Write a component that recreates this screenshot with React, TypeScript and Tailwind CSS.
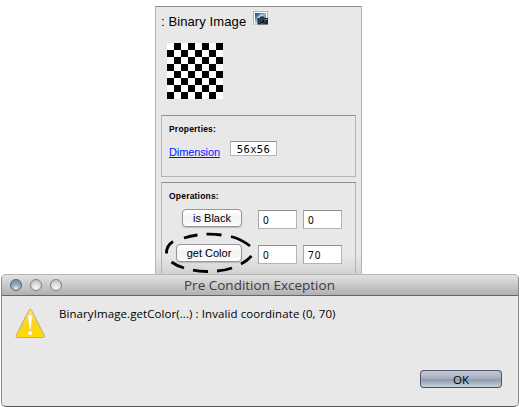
import React from 'react';

function Checkerboard() {
  return (
    <div className="grid h-14 w-14 grid-cols-8">
      {Array.from({ length: 64 }, (_, i) => (
        <span key={i} className={(Math.floor(i / 8) + i) % 2 ? 'bg-black' : 'bg-white'} />
      ))}
    </div>
  );
}

function CameraPicture() {
  return (
    <svg className="mt-1 ml-[7px] h-4 w-4" viewBox="0 0 16 16">
      <defs>
        <linearGradient id="sky" x1="0" y1="0" x2="1" y2="1">
          <stop offset="0" stopColor="#123c68" />
          <stop offset=".5" stopColor="#8fbfe4" />
          <stop offset="1" stopColor="#1c4f83" />
        </linearGradient>
      </defs>
      <rect x=".5" y=".5" width="14" height="12.5" fill="#fff" stroke="#b4b4b4" />
      <rect x="2" y="2" width="11" height="9.500" fill="url(#sky)" />
      <path d="M4 7l4-4 2 1-5 5z" fill="#d7edfa" opacity=".7" />
      <path d="M4.5 7h2l1-1.5h3l1 1.5H15v6.5H4.5z" fill="#26292d" />
      <circle cx="9" cy="10" r="2.6" fill="#111" stroke="#60656b" strokeWidth=".8" />
      <circle cx="8.5" cy="9.5" r="1" fill="#4d6680" />
      <path d="M12 8h2v1h-2z" fill="#90959a" />
    </svg>
  );
}

function WarningIcon() {
  return (
    <svg className="mt-[12px] ml-[13px] h-[32px] w-[31px] shrink-0" viewBox="0 0 30 32">
      <defs>
        <linearGradient id="warn" x1="0" y1="0" x2="0" y2="1">
          <stop offset="0" stopColor="#ffe46a" />
          <stop offset=".55" stopColor="#fbd51b" />
          <stop offset="1" stopColor="#ffdc00" />
        </linearGradient>
      </defs>
      <path d="M13.2 2.2Q14.5.2 15.8 2.2L28.7 27.6Q29.2 29.5 27.4 29.5H1.6Q-.2 29.5.4 27.6Z" transform="translate(.2 0)" fill="url(#warn)" stroke="#b3a77a" strokeWidth=".9" />
      <path d="M12.4 8.7Q12.3 6.5 14.6 6.5T16.9 8.7L15.6 20.5Q14.7 21.9 13.7 20.5Z" fill="#fff" stroke="#e0ba30" strokeWidth=".4" />
      <circle cx="14.6" cy="25" r="2.3" fill="#fff" stroke="#e0ba30" strokeWidth=".4" />
    </svg>
  );
}

function Field({ value }: { value: string }) {
  return (
    <div className="h-[19px] w-[39px] border border-[#b5b5b5] border-t-[#8f8f8f] border-l-[#a5a5a5] bg-white pl-1 font-['Noto_Sans',sans-serif] text-[10px] leading-[18px] tracking-[1px]">
      {value}
    </div>
  );
}

function Row({ label, a, b, buttonClass }: { label: string; a: string; b: string; buttonClass: string }) {
  return (
    <div className="flex h-[35px]">
      <div className="flex w-[80px] justify-end">
        <button className={'-mt-px h-[18px] rounded-[4px] border border-[#969696] bg-linear-to-b from-white via-[#f3f3f3] to-[#fefefe] text-[11px] leading-[16px] shadow-[0_1px_1px_#bbb] ' + buttonClass}>
          {label}
        </button>
      </div>
      <div className="ml-4 flex gap-[6px]">
        <Field value={a} />
        <Field value={b} />
      </div>
    </div>
  );
}

function TrafficLight({ active = false }: { active?: boolean }) {
  return (
    <span className={'h-3 w-3 rounded-full border ' + (active
      ? 'border-[#59636e] bg-[radial-gradient(circle_at_50%_85%,#d9e8f1_0%,#91a3b1_50%,#718290_100%)]'
      : 'border-[#828282] bg-[radial-gradient(circle_at_50%_80%,#f8f8f8_0%,#dadada_50%,#b5b5b5_100%)]')} />
  );
}

export default function App() {
  return (
    <div className="flex h-[407px] w-[520px] flex-col overflow-hidden bg-white pt-[6px] font-['Liberation_Sans',Arial,sans-serif] text-black">
      <section className="relative ml-[155px] flex h-[268px] w-[207px] flex-col border border-b-0 border-[#b5b5b5] border-t-[#8f8f8f] bg-[linear-gradient(#e8e8e8_93%,#d2d2d2)] px-[5px]">
        <header className="flex h-9 items-start">
          <h1 className="mt-[6px] text-[13px] leading-[17px] tracking-[0.1px] whitespace-pre">: Binary Image</h1>
          <CameraPicture />
        </header>
        <div className="h-[72px] pl-[6px]"><Checkerboard /></div>

        <div className="h-[62px] border border-[#b5b5b5] border-t-[#8f8f8f] pl-[7px]">
          <h2 className="pt-[7px] text-[8.5px] leading-[12px] font-bold tracking-[0.2px]">Properties:</h2>
          <div className="flex">
            <a className="mt-[10px] h-[14px] w-[51px] text-[11px] leading-[14px] tracking-[-0.12px] text-[#0018ff] underline">Dimension</a>
            <div className="ml-[10px] mt-[6px] h-[15px] w-[47px] border border-[#b5b5b5] border-t-[#8f8f8f] bg-white text-center font-['DejaVu_Sans_Mono',monospace] text-[10.5px] leading-[14px] tracking-[0.4px]">56x56</div>
          </div>
        </div>

        <div className="mt-[5px] h-[92px] border border-b-0 border-[#b5b5b5] border-t-[#8f8f8f]">
          <h2 className="h-[27px] pt-[7px] pl-[7px] text-[8.5px] leading-[12px] font-bold tracking-[0.2px]">Operations:</h2>
          <Row label="is Black" a="0" b="0" buttonClass="w-[60px]" />
          <Row label="get Color" a="0" b="70" buttonClass="w-[66px]" />
        </div>

        <svg className="pointer-events-none absolute top-[225px] left-[8px] h-[42px] w-[92px]" viewBox="164 232 92 42" fill="none" stroke="#050505" strokeWidth="2.8">
          <path d="M184 238Q190 236 197.500 235" />
          <path d="M206.500 234.200Q214 234 221.500 235" />
          <path d="M231 236.500Q241 239 250 246" />
          <path d="M251.500 256Q247 261 241 264" />
          <path d="M232 268Q225 270.500 217 271" />
          <path d="M208 271.500Q200 271.700 193 270.200" />
          <path d="M184 268Q177 266 171.500 262" />
          <path d="M166.500 253.500Q166 246 173 241.500" />
        </svg>
      </section>

      <section className="ml-px h-[133px] w-[518px] overflow-hidden rounded-[5px] border border-[#8b8b8b] border-t-[#b5b5b5] border-b-[#555] bg-[#e8e8e8] font-['Open_Sans',sans-serif]">
        <header className="flex h-[21px] items-center border-b border-[#666] bg-linear-to-b from-[#e2e2e2] to-[#b1b1b1] pl-2">
          <div className="flex w-[174px] gap-2">
            <TrafficLight active />
            <TrafficLight />
            <TrafficLight />
          </div>
          <h2 className="text-[13.5px] leading-[20px] whitespace-nowrap text-[#3c3c3c]">Pre Condition Exception</h2>
        </header>
        <div className="flex h-[74px]">
          <WarningIcon />
          <p className="mt-[9px] ml-[13px] text-[11.5px] leading-[17px] tracking-[0.08px] whitespace-nowrap">BinaryImage.getColor(...) : Invalid coordinate (0, 70)</p>
        </div>
        <footer className="flex justify-end pr-[16px]">
          <button className="h-[18px] w-[82px] rounded-[4px] border border-[#53536d] border-b-[#414d5b] bg-[linear-gradient(#c4cad6,#a8b0c0_45%,#8e9aad_55%,#c8d5dc)] text-[11.5px] leading-[15px]">OK</button>
        </footer>
      </section>
    </div>
  );
}
